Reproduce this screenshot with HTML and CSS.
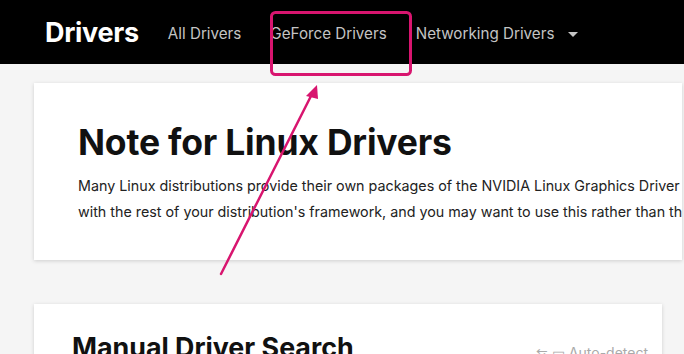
FILE: index.html
```html
<!DOCTYPE html>
<html lang="en">
<head>
    <meta charset="UTF-8">
    <title>Drivers</title>
    <link rel="stylesheet" href="styles.css">
</head>
<body>
    <div class="navbar">
        <span class="brand">Drivers</span>
        <div class="menu">
            <a href="#">All Drivers</a>
            <a href="#">GeForce Drivers</a>
            <a href="#" class="dropdown">Networking Drivers <span class="caret"></span></a>
        </div>
    </div>
    <div class="page">
        <div class="card note">
            <h1>Note for Linux Drivers</h1>
            <p>Many Linux distributions provide their own packages of the NVIDIA Linux Graphics Driver that may be better integrated<br>with the rest of your distribution's framework, and you may want to use this rather than the driver found here.</p>
        </div>
        <div class="card search">
            <h2>Manual Driver Search</h2>
            <span class="help">⇆ ▭ Auto-detect</span>
        </div>
    </div>
    <!-- annotation overlay -->
    <svg class="annotation" width="684" height="354" viewBox="0 0 684 354">
        <rect x="271.5" y="12.5" width="139" height="62" rx="4" fill="none" stroke="#d8156f" stroke-width="3"/>
        <line x1="221" y1="274" x2="312" y2="94" stroke="#d8156f" stroke-width="2.5" stroke-linecap="round"/>
        <polygon points="317,85 306,96 318,99" fill="#d8156f"/>
    </svg>
</body>
</html>
```

FILE: styles.css
```css
body {
    margin: 0;
    font-family: Inter, 'Liberation Sans', Arial, sans-serif;
    background: #f5f5f5;
    width: 684px;
    height: 354px;
    overflow: hidden;
    position: relative;
}
.navbar {
    background: #000;
    height: 64px;
    display: flex;
    align-items: center;
    padding-left: 45px;
}
.navbar .brand {
    color: #fff;
    font-size: 27px;
    font-weight: bold;
    letter-spacing: -0.3px;
    margin-right: 29px;
}
.navbar .menu {
    display: flex;
    align-items: center;
    gap: 29px;
    padding-top: 2px;
}
.navbar .menu a {
    color: #c4c4c4;
    text-decoration: none;
    font-size: 15.2px;
}
.navbar .caret {
    display: inline-block;
    width: 0;
    height: 0;
    border-left: 5px solid transparent;
    border-right: 5px solid transparent;
    border-top: 5px solid #c4c4c4;
    margin-left: 9px;
    vertical-align: middle;
}
.page {
    padding: 19px 0 0 34px;
}
.card {
    background: #fff;
    box-shadow: 0 1px 4px rgba(0,0,0,0.16);
    overflow: hidden;
}
.note {
    width: 648px;
    height: 177px;
    padding: 0 0 0 44px;
    box-sizing: border-box;
}
.note h1 {
    margin: 40px 0 0 0;
    font-size: 35.5px;
    line-height: 40px;
    font-weight: bold;
    color: #111;
    letter-spacing: -0.2px;
}
.note p {
    margin: 10px 0 0 0;
    font-size: 14.3px;
    line-height: 26px;
    color: #222;
    white-space: nowrap;
}
.search {
    margin-top: 44px;
    width: 628px;
    height: 80px;
    padding: 0 0 0 38px;
    box-sizing: border-box;
    display: flex;
    justify-content: space-between;
    align-items: flex-start;
}
.search h2 {
    margin: 27px 0 0 0;
    font-size: 26.8px;
    line-height: 32px;
    font-weight: bold;
    color: #111;
}
.search .help {
    margin: 40px 14px 0 0;
    font-size: 14px;
    color: #aaa;
}
.annotation {
    position: absolute;
    top: 0;
    left: 0;
    pointer-events: none;
}
```
